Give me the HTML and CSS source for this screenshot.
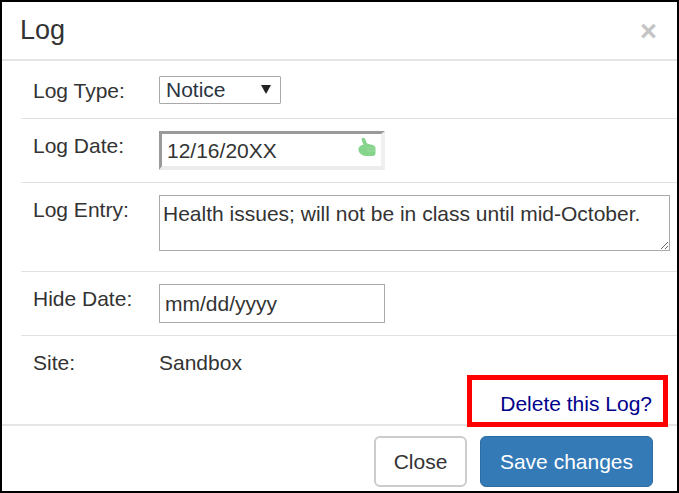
FILE: index.html
```html
<!DOCTYPE html>
<html lang="en">
<head>
<meta charset="utf-8">
<title>Log</title>
<link rel="stylesheet" href="styles.css">
</head>
<body>
<div class="modal">
  <header class="modal-header">
    <h1 class="modal-title">Log</h1>
    <span class="close-x">×</span>
  </header>
  <div class="modal-body">
    <div class="row row-type">
      <span class="label">Log Type:</span>
      <div class="select"><span>Notice</span><i class="caret"></i></div>
    </div>
    <div class="row row-date">
      <span class="label">Log Date:</span>
      <div class="date-focus">
        <input class="date-input" type="text" value="12/16/20XX">
        <svg class="thumb" viewBox="0 0 18 20" width="18" height="20" aria-hidden="true">
          <path d="M4.500 1C6 .5 7 1.500 7.500 3L9 6.500 14.500 8C16.500 8.500 17.500 9.500 17.500 11V16C17.500 18 16.500 19 14.500 19H8.500C4.500 19 1 16.500.5 13 .2 11 1.200 9.500 3 8.500L5.500 7.500 3.800 3.500C3.400 2.500 3.500 1.300 4.500 1z" fill="#86d38c"/>
          <path d="M9 11h8M9 14h8" stroke="#98dc9c" stroke-width="1" fill="none"/>
        </svg>
      </div>
    </div>
    <div class="row row-entry">
      <span class="label">Log Entry:</span>
      <textarea class="entry">Health issues; will not be in class until mid-October.</textarea>
    </div>
    <div class="row row-hide">
      <span class="label">Hide Date:</span>
      <input class="hide-input" type="text" value="mm/dd/yyyy">
    </div>
    <div class="row-site">
      <span class="label">Site:</span>
      <span class="site-value">Sandbox</span>
    </div>
    <div class="delete-row">
      <a class="delete-link" href="#">Delete this Log?</a>
      <span class="highlight"></span>
    </div>
  </div>
  <footer class="modal-footer">
    <button class="btn btn-default" type="button">Close</button>
    <button class="btn btn-primary" type="button">Save changes</button>
  </footer>
</div>
</body>
</html>
```
FILE: styles.css
```css
* { box-sizing: border-box; }
html, body { margin: 0; padding: 0; background: #fff; }
body {
  width: 679px;
  height: 493px;
  overflow: hidden;
  font-family: "Liberation Sans", Arial, sans-serif;
  color: #333;
  font-size: 21px;
}
.modal {
  width: 679px;
  height: 493px;
  border: 2px solid #000;
  background: #fff;
  display: flex;
  flex-direction: column;
}
.modal-header {
  height: 59px;
  flex: none;
  border-bottom: 2px solid #e5e5e5;
  display: flex;
  align-items: center;
  justify-content: space-between;
  padding: 0 20px 2px 18px;
}
.modal-title { margin: 0; font-size: 27px; font-weight: 400; line-height: 30px; }
.close-x { font-size: 29px; font-weight: 700; color: #c4c4c4; line-height: 30px; margin-top: 3px; }
.modal-body { flex: 1; display: flex; flex-direction: column; padding-left: 19px; }
.row {
  display: flex;
  align-items: flex-start;
  border-bottom: 1px solid #e2e2e2;
  flex: none;
}
.label { width: 138px; padding-left: 12px; flex: none; line-height: 24px; }
.row-type { height: 58px; padding-top: 15px; }
.row-type .label { padding-top: 3px; }
.select {
  width: 122px;
  height: 28px;
  border: 1px solid #a9a9a9;
  border-radius: 1px;
  display: flex;
  align-items: center;
  justify-content: space-between;
  padding: 0 9px 0 6px;
  color: #2a3542;
}
.caret {
  width: 0;
  height: 0;
  border-left: 5px solid transparent;
  border-right: 5px solid transparent;
  border-top: 9px solid #222;
  margin-bottom: 1px;
}
.row-date { height: 64px; padding-top: 12px; }
.row-date .label { padding-top: 3px; }
.date-focus { position: relative; width: 226px; height: 39px; }
.date-input {
  width: 226px;
  height: 39px;
  border-style: solid;
  border-width: 3px 4px 4px 3px;
  border-color: #9a9a9a #f0f0f0 #ececec #9a9a9a;
  padding: 2px 0 0 5px;
  font: inherit;
  color: #333;
  outline: none;
}
.thumb { position: absolute; right: 9px; top: 6px; }
.row-entry { height: 89px; padding-top: 12px; }
.row-entry .label { padding-top: 3px; }
.entry {
  width: 511px;
  height: 56px;
  border: 1px solid #a9a9a9;
  padding: 5px 3px;
  font: inherit;
  line-height: 25px;
  color: #333;
  outline: none;
  margin: 0;
}
.row-hide { height: 64px; padding-top: 12px; }
.row-hide .label { padding-top: 3px; }
.hide-input {
  width: 226px;
  height: 39px;
  border: 1px solid #a9a9a9;
  padding: 0 0 0 5px;
  font: inherit;
  color: #333;
  outline: none;
}
.row-site { display: flex; height: 54px; padding-top: 15px; flex: none; }
.site-value { line-height: 24px; }
.delete-row {
  flex: 1;
  position: relative;
  display: flex;
  justify-content: flex-end;
  padding: 2px 25px 0 0;
  line-height: 24px;
}
.delete-link { color: #00008b; text-decoration: none; }
.highlight {
  position: absolute;
  left: 446px;
  top: -15px;
  width: 201px;
  height: 52px;
  border: 5px solid #f00;
}
.modal-footer {
  height: 67px;
  flex: none;
  border-top: 2px solid #e5e5e5;
  display: flex;
  justify-content: flex-end;
  gap: 13px;
  padding: 10px 24px 0 0;
}
.btn {
  height: 51px;
  border-radius: 6px;
  font: inherit;
  padding: 0;
}
.btn-default { width: 93px; background: #fff; border: 2px solid #ccc; color: #333; }
.btn-primary { width: 173px; background: #337ab7; border: 1px solid #2e6da4; color: #fff; }
```
